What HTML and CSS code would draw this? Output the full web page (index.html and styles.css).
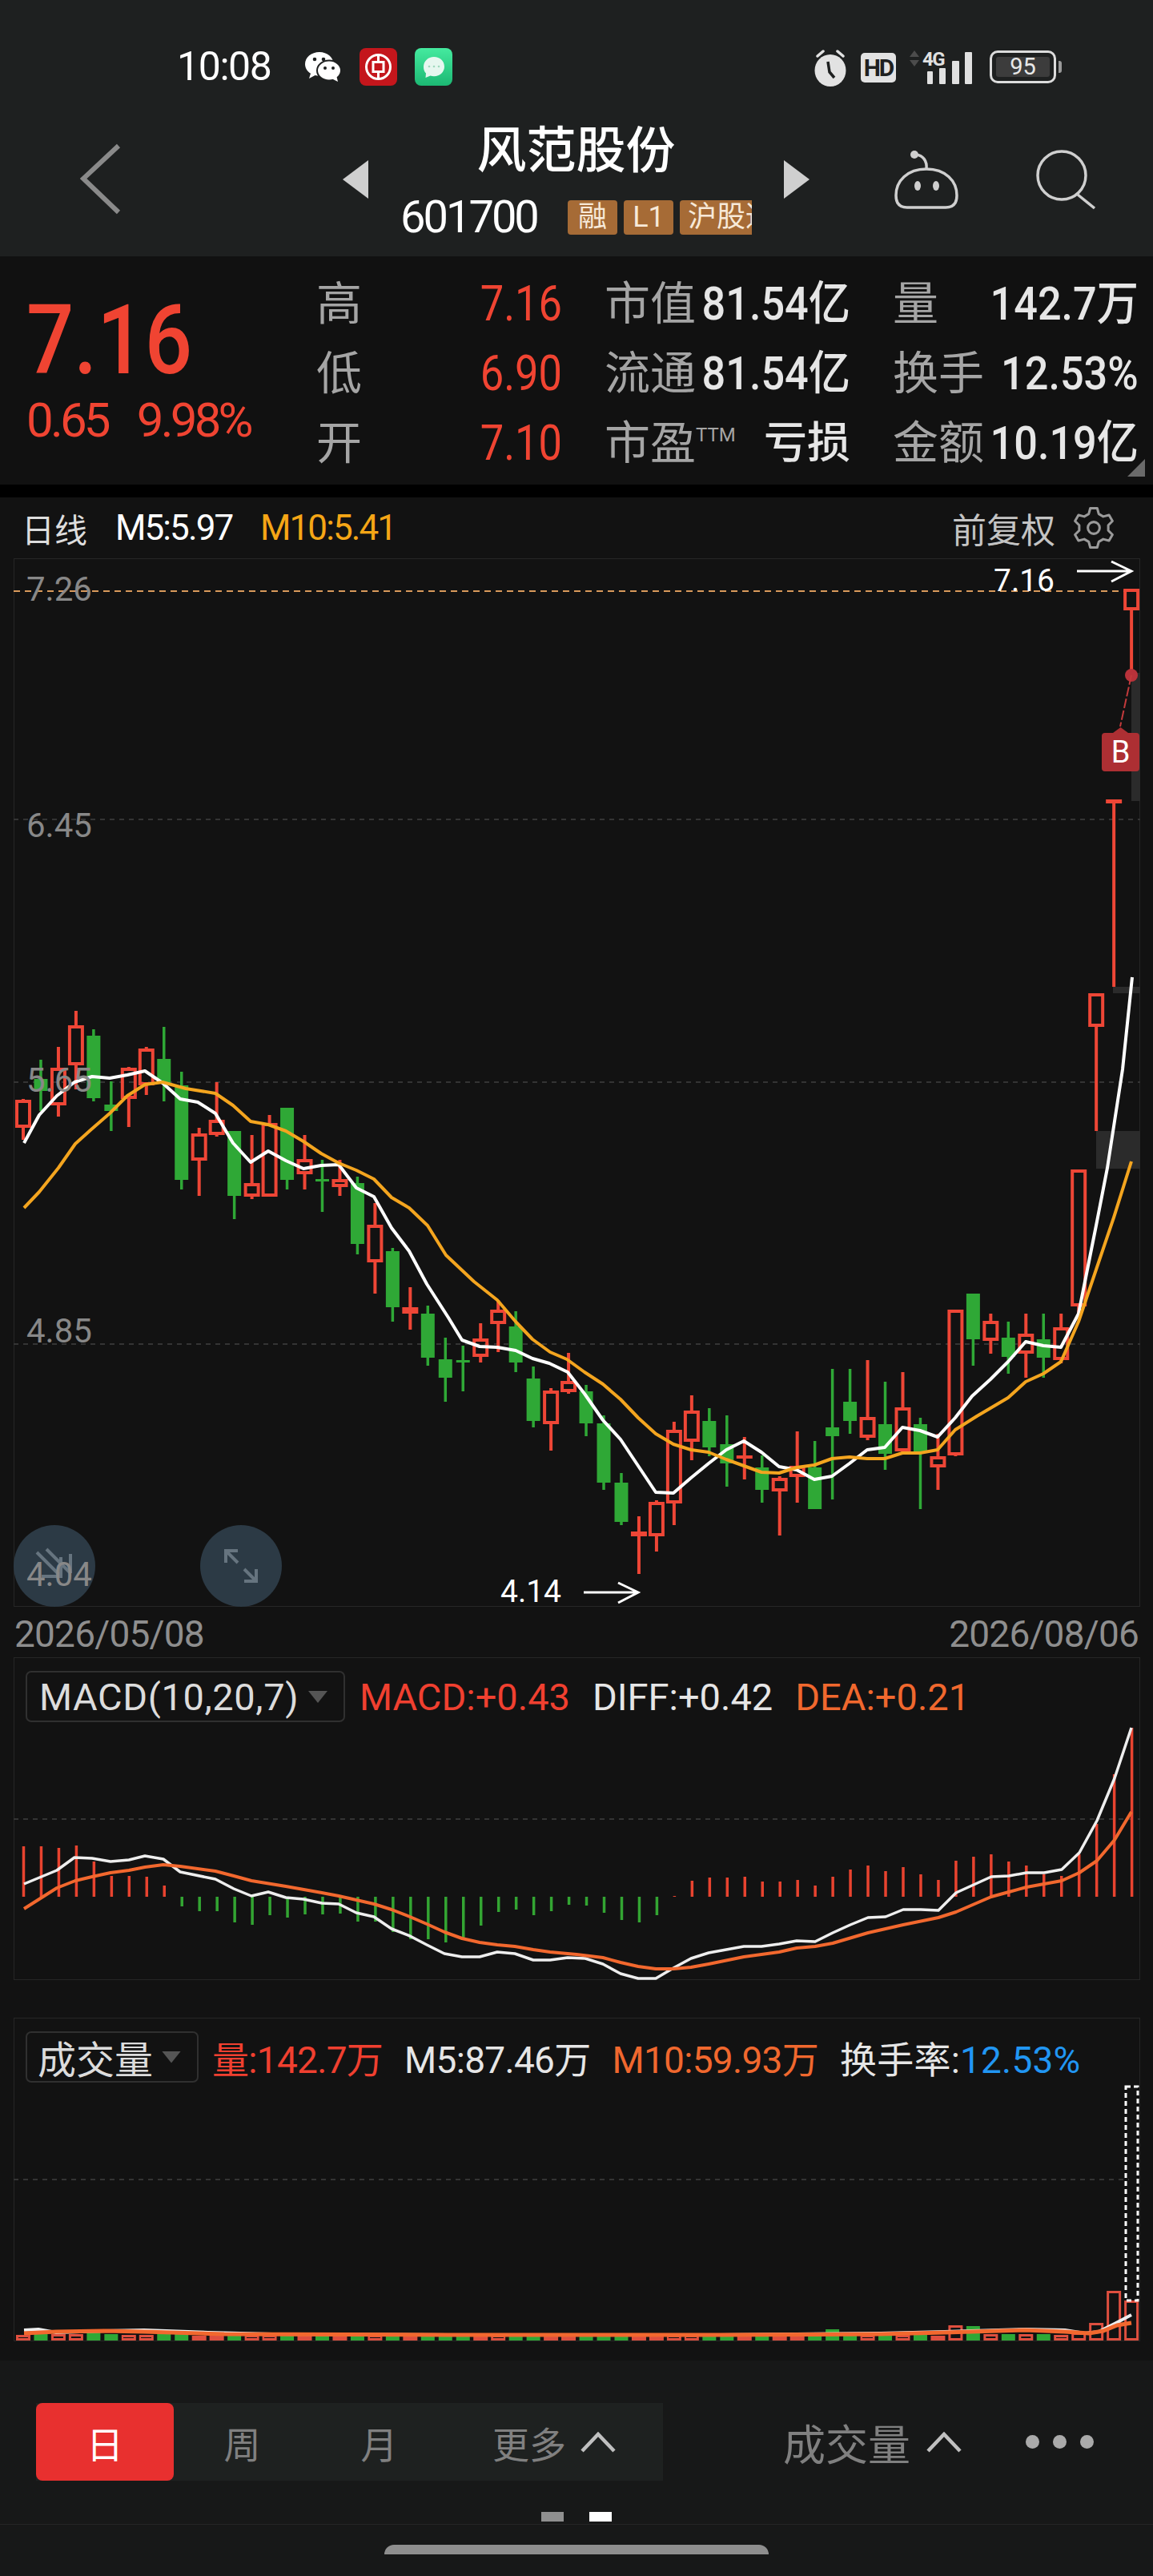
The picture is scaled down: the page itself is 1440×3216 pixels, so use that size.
FILE: index.html
```html
<!DOCTYPE html>
<html lang="zh-CN">
<head>
  <meta charset="UTF-8">
  <meta name="viewport" content="width=device-width, initial-scale=1">
  <title>风范股份</title>
  <link rel="stylesheet" href="styles.css">
</head>
<body>

  <div class="top">
    <!-- status bar -->
    <div class="status">
      <span class="clock">10:08</span>
      <svg class="ic-wechat" viewBox="381 65 46 38">
        <path fill="#fff" d="M399 65c-10 0-18 6.500-18 15 0 5 2.800 9 7 11.700l-2 6.300 7.500-4 6 1c8-1 17-6 17-15 0-8.500-8-15-17.500-15z"/>
        <circle cx="393" cy="74" r="2.300" fill="#1e2020"/>
        <circle cx="404" cy="74" r="2.300" fill="#1e2020"/>
        <ellipse cx="411" cy="88" rx="15" ry="12.500" fill="#fff" stroke="#1e2020" stroke-width="2"/>
        <path fill="#fff" d="M414 98l8 4-2-8z"/>
        <circle cx="406" cy="85" r="2" fill="#1e2020"/>
        <circle cx="416" cy="85" r="2" fill="#1e2020"/>
      </svg>
      <svg class="ic-app ic-bank" viewBox="0 0 47 47">
        <rect width="47" height="47" rx="8" fill="#c4161c"/>
        <circle cx="23.500" cy="23.500" r="15" fill="none" stroke="#fff" stroke-width="3"/>
        <rect x="17" y="17.500" width="13" height="12" fill="none" stroke="#fff" stroke-width="3"/>
        <path d="M23.500 8v9M23.500 30v9" stroke="#fff" stroke-width="3"/>
      </svg>
      <svg class="ic-app ic-msg" viewBox="0 0 47 47">
        <defs>
          <linearGradient id="msgbg" x1="0" y1="0" x2="0" y2="1">
            <stop offset="0" stop-color="#45ea9f"/>
            <stop offset="1" stop-color="#1cb873"/>
          </linearGradient>
        </defs>
        <rect width="47" height="47" rx="8" fill="url(#msgbg)"/>
        <path fill="#e6f7ef" d="M24 11c-7.500 0-13 5.500-13 12.500 0 3.500 1 6 3 8l-.5 5.500 6-2.500c1.500.5 3 .7 4.500.7 7.500 0 13-5.500 13-12 0-7-5.500-12.200-13-12.200z"/>
        <g fill="#9fd9bd"><circle cx="18" cy="23" r="1.300"/><circle cx="24" cy="23" r="1.300"/><circle cx="30" cy="23" r="1.300"/></g>
      </svg>
      <span class="status-gap"></span>
      <svg class="ic-alarm" viewBox="0 0 44 46">
        <g stroke="#e2e2e2" stroke-width="3.500" stroke-linecap="round">
          <path d="M6 8l7-6M38 8l-7-6"/>
        </g>
        <ellipse cx="22" cy="26" rx="19.500" ry="20" fill="#e2e2e2"/>
        <path d="M19 15l2 13 6 7" fill="none" stroke="#1e2020" stroke-width="3.500"/>
      </svg>
      <span class="hd">HD</span>
      <svg class="ic-signal" viewBox="1140 60 82 44">
        <path d="M1147 61l-6 8h12zM1147 81l-6-8h12z" fill="#4c4c4c"/>
        <text class="net" x="1157" y="80">4G</text>
        <g fill="#e0e0e0">
          <rect x="1163" y="87" width="7" height="16" rx="1"/>
          <rect x="1178" y="83" width="8" height="20" rx="1"/>
          <rect x="1194" y="74" width="9" height="29" rx="1"/>
          <rect x="1210" y="63" width="9" height="40" rx="1"/>
        </g>
      </svg>
      <span class="battery"><span class="battery-in">95</span></span>
      <span class="battery-nub"></span>
    </div>

    <!-- title row -->
    <div class="header">
      <div class="back-cell">
        <svg class="ic-back" viewBox="100 180 52 90"><path d="M148 183l-44 41 44 42" fill="none" stroke="#8a8a8a" stroke-width="6"/></svg>
      </div>
      <span class="tri tri-left"></span>
      <div class="name-box">
        <div class="name">风范股份</div>
        <div class="code-row">
          <span class="code">601700</span>
          <span class="tag">融</span>
          <span class="tag">L1</span>
          <span class="tag tag-cut">沪股通</span>
        </div>
      </div>
      <span class="tri tri-right"></span>
      <div class="head-tools">
        <svg class="ic-robot" viewBox="1115 188 84 75">
          <g fill="none" stroke="#cfcfcf" stroke-width="3.500">
            <path d="M1157 212c-24 0-38 15-38 33 0 10 5 15 14 15h48c9 0 14-5 14-15 0-18-14-33-38-33z"/>
            <path d="M1157 212c1-10-4-17-13-18"/>
          </g>
          <circle cx="1142" cy="194" r="5" fill="#cfcfcf"/>
          <ellipse cx="1146" cy="233" rx="4" ry="6" fill="#cfcfcf"/>
          <ellipse cx="1169" cy="233" rx="4" ry="6" fill="#cfcfcf"/>
        </svg>
        <svg class="ic-search" viewBox="1290 184 76 76">
          <ellipse cx="1323" cy="217" rx="30" ry="30" fill="none" stroke="#cfcfcf" stroke-width="3.500"/>
          <path d="M1343 241l21 17" fill="none" stroke="#cfcfcf" stroke-width="3.500"/>
        </svg>
      </div>
    </div>
  </div>

  <!-- quote block -->
  <div class="quote">
    <div class="price-box">
      <div class="price">7.16</div>
      <div class="change"><span>0.65</span><span>9.98%</span></div>
    </div>
    <div class="stats">
      <div class="stat"><span class="lbl">高</span><span class="val up">7.16</span></div>
      <div class="stat"><span class="lbl">市值</span><span class="val">81.54亿</span></div>
      <div class="stat"><span class="lbl">量</span><span class="val">142.7万</span></div>
      <div class="stat"><span class="lbl">低</span><span class="val up">6.90</span></div>
      <div class="stat"><span class="lbl">流通</span><span class="val">81.54亿</span></div>
      <div class="stat"><span class="lbl">换手</span><span class="val">12.53%</span></div>
      <div class="stat"><span class="lbl">开</span><span class="val up">7.10</span></div>
      <div class="stat"><span class="lbl">市盈<sup class="ttm">TTM</sup></span><span class="val val-cn">亏损</span></div>
      <div class="stat"><span class="lbl">金额</span><span class="val">10.19亿</span></div>
    </div>
    <span class="corner"></span>
  </div>
  <div class="band"></div>

  <!-- k line -->
  <div class="kline-head">
    <span class="period">日线</span>
    <span class="ma5">M5:5.97</span>
    <span class="ma10">M10:5.41</span>
    <span class="fq">前复权</span>
    <svg class="ic-gear" viewBox="0 0 24 24">
      <path fill="none" stroke="#9a9a9a" stroke-width="1.400" stroke-linejoin="round" d="M10 .7h4l.9 3.300 2.560 1.490 3.340-.89 2 3.470-2.430 2.450v2.960l2.430 2.450-2 3.470-3.340-.89-2.560 1.490-.9 3.300h-4l-.9-3.300-2.560-1.490-3.340.89-2-3.470 2.430-2.450v-2.960l-2.430-2.450 2-3.470 3.340.89 2.560-1.490z"/>
      <circle cx="12" cy="12" r="3.400" fill="none" stroke="#9a9a9a" stroke-width="1.400"/>
    </svg>
  </div>
  <div class="panel kline">
    <svg class="chart" width="1407" height="1309" viewBox="17 697 1407 1309">
      <g class="grid-lines">
        <path d="M17 1023H1424M17 1351H1424M17 1678H1424"/>
      </g>
      <path class="hi-line" d="M17 738H1405"/>
      <g fill="#2b2b2b">
        <rect x="1413" y="840" width="11" height="160"/>
        <rect x="1390" y="1232" width="34" height="8"/>
        <rect x="1369" y="1412" width="55" height="47"/>
      </g>
      <g id="candles"></g>
      <polyline id="ma5" class="ma-white" points=""/>
      <polyline id="ma10" class="ma-orange" points=""/>

      <text class="axis" x="33" y="750">7.26</text>
      <text class="axis" x="33" y="1045">6.45</text>
      <text class="axis" x="33" y="1363">5.65</text>
      <text class="axis" x="33" y="1676">4.85</text>

      <text class="mark" x="1241" y="738">7.16</text>
      <path class="arrow" d="M1345 713H1412M1388 701l25 12-25 13"/>
      <text class="mark" x="625" y="2000">4.14</text>
      <path class="arrow" d="M729 1988H796M772 1976l25 12-25 13"/>

      <circle cx="1413" cy="843" r="8" fill="#b8323a"/>
      <path d="M1413 843L1399 907" stroke="#c23a3c" stroke-width="2" stroke-dasharray="12 3"/>
      <path d="M1380 915h10l9.500-7 9.500 7h10q4 0 4 4v40q0 4-4 4h-39q-4 0-4-4v-40q0-4 4-4z" fill="#ad2f33"/>
      <text class="buy" x="1399.500" y="952">B</text>

      <circle class="float-btn" cx="68" cy="1955" r="51"/>
      <circle class="float-btn" cx="301" cy="1955" r="51"/>
      <path class="float-ic" d="M46 1938l30 30M76 1944v24H52M58 1934l30 30M88 1940v24"/>
      <path class="float-ic" d="M282 1936l15 15M282 1951v-15h15M320 1974l-15-15M320 1959v15h-15"/>
      <text class="axis" x="33" y="1980">4.04</text>
    </svg>
  </div>
  <div class="dates">
    <span>2026/05/08</span>
    <span>2026/08/06</span>
  </div>

  <!-- macd -->
  <div class="panel macd">
    <div class="legend legend-macd">
      <span class="select select-macd">MACD(10,20,7)<i class="caret"></i></span>
      <span class="c-red">MACD:+0.43</span>
      <span class="c-white">DIFF:+0.42</span>
      <span class="c-orange">DEA:+0.21</span>
    </div>
    <svg class="chart" width="1407" height="322" viewBox="17 2150 1407 322">
      <g class="grid-lines"><path d="M17 2271H1424"/></g>
      <g id="macd-bars"></g>
      <polyline id="diff" class="diff-line" points=""/>
      <polyline id="dea" class="dea-line" points=""/>
    </svg>
  </div>

  <!-- volume -->
  <div class="panel vol">
    <div class="legend legend-vol">
      <span class="select select-vol">成交量<i class="caret"></i></span>
      <span class="c-red">量:142.7万</span>
      <span class="c-white">M5:87.46万</span>
      <span class="c-orange">M10:59.93万</span>
      <span class="c-white rate">换手率:<b class="c-blue">12.53%</b></span>
    </div>
    <svg class="chart" width="1407" height="323" viewBox="17 2600 1407 323">
      <g class="grid-lines"><path d="M17 2721H1410"/></g>
      <g id="vol-bars"></g>
      <rect class="vol-dash" x="1406" y="2605" width="15" height="267"/>
      <polyline id="vol-ma5" class="vol-white" points=""/>
      <polyline id="vol-ma10" class="vol-orange" points=""/>
    </svg>
  </div>

  <!-- bottom tabs -->
  <div class="footer">
    <div class="tab-row">
      <div class="tabs">
        <span class="tab tab-on">日</span>
        <span class="tab">周</span>
        <span class="tab">月</span>
        <span class="tab tab-more">更多
          <svg class="chev" viewBox="0 0 44 26"><path d="M2 24L22 3l20 21"/></svg>
        </span>
      </div>
      <span class="vol-pick">成交量
        <svg class="chev" viewBox="0 0 44 26"><path d="M2 24L22 3l20 21"/></svg>
      </span>
      <span class="more-dots"><i></i><i></i><i></i></span>
    </div>
    <div class="pager"><i></i><i class="pager-on"></i></div>
    <div class="home-line"><span class="home-bar"></span></div>
  </div>

  <script src="chart.js"></script>
</body>
</html>
```
FILE: styles.css
```css
* {
  box-sizing: border-box;
}

body {
  margin: 0;
  width: 1440px;
  height: 3216px;
  overflow: hidden;
  background: #121212;
  color: #e0e0e0;
  font-family: Roboto, "Noto Sans CJK SC", sans-serif;
}

svg {
  display: block;
}

/* Top */
.top {
  height: 320px;
  background: #1e2020;
}

.status {
  display: flex;
  align-items: center;
  height: 107px;
  padding: 60px 0 0 221px;
}

.clock {
  width: 118px;
  font-size: 50px;
  line-height: 47px;
  letter-spacing: -1.400px;
  color: #fff;
  white-space: nowrap;
}

.ic-wechat {
  width: 46px;
  height: 38px;
  margin-left: 42px;
}

.ic-app {
  width: 47px;
  height: 47px;
}

.ic-bank {
  margin-left: 22px;
}

.ic-msg {
  margin-left: 22px;
}

.status-gap {
  width: 450px;
}

.ic-alarm {
  width: 44px;
  height: 46px;
  margin-top: 2px;
}

.hd {
  width: 44px;
  height: 37px;
  margin: 2px 0 0 16px;
  border-radius: 5px;
  background: #e2e2e2;
  color: #1e2020;
  font-size: 30px;
  font-weight: 700;
  line-height: 37px;
  letter-spacing: -2px;
  text-align: center;
}

.ic-signal {
  width: 82px;
  height: 44px;
  margin-left: 16px;
  overflow: visible;
}

.net {
  font-size: 24px;
  font-weight: 700;
  fill: #e0e0e0;
  letter-spacing: -1.500px;
}

.battery {
  width: 83px;
  height: 41px;
  margin-left: 19px;
  padding: 5px;
  border: 3px solid #dcdcdc;
  border-radius: 10px;
}

.battery-in {
  display: block;
  height: 25px;
  border-radius: 3px;
  background: #3c3c3c;
  color: #e8e8e8;
  font-size: 29px;
  line-height: 25px;
  text-align: center;
}

.battery-nub {
  width: 4px;
  height: 15px;
  margin-left: 3px;
  border-radius: 0 3px 3px 0;
  background: #9a9a9a;
}

.header {
  display: grid;
  grid-template-columns: 428px 32px 519px 32px 1fr;
  align-items: center;
  height: 213px;
}

.back-cell {
  padding-left: 100px;
  margin-top: 21px;
}

.ic-back {
  width: 52px;
  height: 90px;
}

.tri {
  height: 48px;
  margin-top: 21px;
  background: #cfcfcf;
}

.tri-left {
  clip-path: polygon(100% 0, 0 50%, 100% 100%);
}

.tri-right {
  clip-path: polygon(0 0, 100% 50%, 0 100%);
}

.name-box {
  display: flex;
  flex-direction: column;
  align-items: center;
  height: 213px;
  padding-top: 41px;
}

.name {
  height: 82px;
  color: #fff;
  font-size: 62px;
  font-weight: 500;
  line-height: 82px;
}

.code-row {
  display: flex;
  align-items: center;
  height: 43px;
  margin-top: 20px;
}

.code {
  width: 170px;
  margin-right: 39px;
  color: #fff;
  font-size: 56px;
  line-height: 43px;
  letter-spacing: -3px;
}

.tag {
  width: 62px;
  height: 43px;
  margin-right: 8px;
  border-radius: 4px;
  background: #a66b36;
  color: #f7e9d8;
  font-size: 36px;
  line-height: 43px;
  text-align: center;
}

.tag-cut {
  width: 90px;
  margin-right: 0;
  padding-left: 10px;
  border-radius: 4px 0 0 4px;
  overflow: hidden;
  white-space: nowrap;
  text-align: left;
}

.head-tools {
  display: flex;
  align-items: center;
  gap: 94px;
  margin-top: 21px;
  padding-left: 104px;
}

.ic-robot {
  width: 84px;
  height: 75px;
}

.ic-search {
  width: 76px;
  height: 76px;
}

/* Quote */
.quote {
  position: relative;
  display: flex;
  height: 285px;
  background: #111;
}

.price-box {
  width: 395px;
  padding: 45px 0 0 33px;
  color: #f04432;
}

.price {
  font-size: 120px;
  font-weight: 500;
  line-height: 120px;
  transform: scaleX(.87);
  transform-origin: left;
}

.change {
  display: flex;
  gap: 36px;
  font-size: 60px;
  line-height: 80px;
  letter-spacing: -3.800px;
}

.stats {
  display: grid;
  grid-template-columns: repeat(3, 307px);
  grid-auto-rows: 87px;
  column-gap: 53px;
  padding-top: 16px;
}

.stat {
  display: flex;
  align-items: center;
  justify-content: space-between;
  height: 87px;
  white-space: nowrap;
}

.lbl {
  flex: none;
  color: #a5a5a5;
  font-size: 57px;
  line-height: 87px;
}

.ttm {
  font-size: 24px;
  line-height: 0;
  vertical-align: 22px;
}

.val {
  flex: none;
  margin-left: -40px;
  color: #e6e6e6;
  font-size: 58px;
  font-weight: 500;
  line-height: 87px;
  transform: scaleX(.9);
  transform-origin: right;
}

.val.up {
  color: #f04432;
  font-size: 61px;
  font-weight: 400;
  transform: scaleX(.86);
}

.val-cn {
  font-size: 54px;
  transform: none;
}

.corner {
  position: absolute;
  right: 10px;
  bottom: 10px;
  width: 22px;
  height: 22px;
  background: #6a6a6a;
  clip-path: polygon(100% 0, 100% 100%, 0 100%);
}

.band {
  height: 16px;
  background: #000;
}

/* K line head */
.kline-head {
  display: flex;
  align-items: center;
  height: 76px;
  padding: 0 48px 0 27px;
}

.period {
  width: 117px;
  color: #ddd;
  font-size: 41px;
}

.ma5,
.ma10 {
  font-size: 44px;
  letter-spacing: -1.900px;
}

.ma5 {
  width: 181px;
  color: #fff;
}

.ma10 {
  color: #f5a616;
}

.fq {
  margin-left: auto;
  color: #c4c4c4;
  font-size: 43px;
}

.ic-gear {
  width: 52px;
  height: 52px;
  margin-left: 22px;
}

/* Panels */
.panel {
  margin: 0 16px 0 17px;
  box-shadow: inset 0 0 0 1px #262626;
}

.kline {
  height: 1309px;
}

.chart {
  overflow: visible;
}

.grid-lines path {
  fill: none;
  stroke: #343434;
  stroke-width: 2;
  stroke-dasharray: 6 6;
}

.hi-line {
  fill: none;
  stroke: #d99a5b;
  stroke-width: 2;
  stroke-dasharray: 8 6;
}

.ma-white,
.ma-orange {
  fill: none;
  stroke-width: 4;
  stroke-linejoin: round;
}

.ma-white {
  stroke: #fff;
}

.ma-orange {
  stroke: #f4a51f;
}

.axis {
  fill: #888;
  font-size: 42px;
}

.mark {
  fill: #fff;
  font-size: 39px;
}

.arrow {
  fill: none;
  stroke: #fff;
  stroke-width: 3;
}

.buy {
  fill: #fff;
  font-size: 38px;
  text-anchor: middle;
}

.float-btn {
  fill: #2c3a45;
}

.float-ic {
  fill: none;
  stroke: #66747f;
  stroke-width: 4;
}

.dates {
  display: flex;
  align-items: center;
  justify-content: space-between;
  height: 63px;
  padding: 4px 18px 0;
  color: #8e8e8e;
  font-size: 46px;
  letter-spacing: -.8px;
}

/* Legends */
.legend {
  display: flex;
  align-items: center;
  font-size: 47px;
  white-space: nowrap;
}

.legend-macd {
  gap: 28px;
  height: 81px;
  padding: 17px 0 0 15px;
}

.legend-vol {
  gap: 27px;
  height: 81px;
  padding: 16px 0 0 15px;
  font-size: 46px;
  letter-spacing: -.7px;
}

.rate {
  letter-spacing: .2px;
}

.select {
  position: relative;
  display: flex;
  align-items: center;
  height: 64px;
  border: 2px solid #303030;
  border-radius: 7px;
  color: #dcdcdc;
}

.select-macd {
  width: 399px;
  margin-right: -10px;
  padding-left: 15px;
  letter-spacing: .6px;
}

.select-vol {
  width: 216px;
  margin-right: -10px;
  padding-left: 13px;
  font-size: 48px;
  letter-spacing: 0;
}

.caret {
  position: absolute;
  right: 20px;
  top: 23px;
  width: 24px;
  height: 15px;
  background: #555;
  clip-path: polygon(0 0, 100% 0, 50% 100%);
}

.c-red {
  color: #f04030;
}

.c-white {
  color: #e6e6e6;
}

.c-orange {
  color: #f0682e;
}

.c-blue {
  color: #2196f3;
  font-weight: 400;
}

.macd {
  height: 403px;
}

.vol {
  height: 404px;
  margin-top: 47px;
}

.diff-line,
.dea-line,
.vol-white,
.vol-orange {
  fill: none;
  stroke-linejoin: round;
}

.diff-line {
  stroke: #eee;
  stroke-width: 3.500;
}

.dea-line {
  stroke: #f2682e;
  stroke-width: 4;
}

.vol-white {
  stroke: #eee;
  stroke-width: 4;
}

.vol-orange {
  stroke: #f2682e;
  stroke-width: 5;
}

.vol-dash {
  fill: none;
  stroke: #fff;
  stroke-width: 3;
  stroke-dasharray: 6 4;
}

/* Footer */
.footer {
  height: 269px;
  margin-top: 24px;
  padding-top: 53px;
  background: #171818;
}

.tab-row {
  display: flex;
  align-items: center;
  height: 97px;
  padding-left: 45px;
}

.tabs {
  display: grid;
  grid-template-columns: 172px 171px 171px 269px;
  width: 783px;
  height: 97px;
  background: #1e2120;
}

.tab {
  display: flex;
  align-items: center;
  justify-content: center;
  color: #808080;
  font-size: 46px;
}

.tab-on {
  border-radius: 8px;
  background: #e8302f;
  color: #fff;
}

.tab-more {
  gap: 18px;
  justify-content: flex-start;
  padding-left: 56px;
}

.chev {
  width: 44px;
  height: 26px;
  fill: none;
  stroke: #c0c0c0;
  stroke-width: 4.500;
}

.vol-pick {
  display: flex;
  align-items: center;
  gap: 20px;
  margin-left: 150px;
  color: #808080;
  font-size: 53px;
}

.more-dots {
  display: flex;
  gap: 17px;
  margin-left: 80px;
}

.more-dots i {
  width: 17px;
  height: 17px;
  border-radius: 50%;
  background: #aaa;
}

.pager {
  display: flex;
  justify-content: center;
  gap: 32px;
  height: 12px;
  margin-top: 39px;
}

.pager i {
  width: 28px;
  height: 12px;
  background: #8f8f8f;
}

.pager .pager-on {
  background: #fff;
}

.home-line {
  display: flex;
  justify-content: center;
  height: 68px;
  margin-top: 3px;
  padding-top: 25px;
  border-top: 1px solid #252525;
}

.home-bar {
  width: 480px;
  height: 12px;
  border-radius: 12px 12px 0 0;
  background: #8e8e8e;
}
```
FILE: chart.js
```js
// day candles: high, body top, body bottom, low (screen y), up or down
const candles = [
  [1372,1373,1408,1423,1],[1323,1347,1362,1387,0],[1307,1333,1380,1394,1],[1262,1280,1330,1360,1],
  [1285,1293,1371,1375,0],[1350,1379,1387,1412,0],[1332,1333,1372,1407,1],[1307,1309,1355,1367,1],
  [1282,1322,1352,1375,0],[1338,1355,1473,1485,0],[1408,1415,1449,1493,1],[1351,1398,1417,1419,1],
  [1412,1412,1493,1522,0],[1417,1477,1494,1497,1],[1392,1402,1494,1494,1],[1383,1383,1473,1485,0],
  [1417,1447,1466,1485,1],[1448,1472,1475,1513,0],[1448,1472,1482,1493,1],[1469,1477,1553,1566,0],
  [1502,1529,1576,1615,1],[1558,1562,1632,1650,0],[1607,1632,1640,1660,1],[1630,1640,1695,1705,0],
  [1670,1697,1720,1750,0],[1680,1698,1700,1737,0],[1652,1671,1694,1701,1],[1623,1635,1653,1688,1],
  [1637,1656,1701,1713,0],[1706,1721,1774,1782,0],[1733,1736,1778,1811,1],[1689,1724,1738,1740,1],
  [1729,1737,1777,1793,0],[1767,1777,1851,1860,0],[1839,1851,1900,1904,0],[1893,1912,1918,1965,1],
  [1873,1875,1918,1937,1],[1775,1785,1877,1904,1],[1742,1761,1800,1823,1],[1758,1774,1807,1818,0],
  [1767,1803,1827,1856,0],[1794,1817,1821,1847,1],[1817,1832,1860,1876,0],[1843,1845,1862,1917,1],
  [1787,1830,1844,1876,1],[1799,1832,1884,1884,0],[1709,1782,1793,1872,0],[1709,1750,1774,1790,0],
  [1698,1769,1795,1798,1],[1725,1778,1815,1835,0],[1713,1757,1812,1813,1],[1770,1778,1812,1884,0],
  [1790,1818,1832,1860,1],[1635,1635,1817,1818,1],[1615,1615,1672,1705,0],[1640,1649,1674,1690,1],
  [1650,1670,1694,1715,0],[1640,1665,1690,1720,1],[1640,1672,1695,1720,0],[1640,1657,1698,1702,1],
  [1460,1460,1631,1640,1],[1240,1240,1282,1412,1],[998,998,1003,1232,1],[735,735,762,840,1]
];

const ma5 = [
  30,1427, 49,1392, 71,1368, 93,1351, 115,1344, 137,1346, 159,1342, 181,1337, 203,1352, 225,1372,
  247,1376, 269,1390, 291,1427, 313,1451, 335,1437, 357,1449, 379,1459, 401,1455, 423,1454, 445,1483,
  467,1494, 489,1533, 511,1562, 533,1603, 560,1645, 577,1673, 599,1681, 621,1682, 644,1686, 665,1696,
  686,1702, 709,1713, 730,1740, 753,1773, 775,1797, 797,1830, 819,1863, 841,1864, 863,1845, 885,1827,
  907,1810, 929,1799, 951,1813, 973,1831, 995,1835, 1017,1847, 1039,1843, 1061,1827, 1083,1810, 1105,1807,
  1127,1782, 1149,1786, 1171,1794, 1193,1770, 1214,1743, 1237,1722, 1259,1700, 1281,1675, 1303,1680,
  1325,1682, 1347,1640, 1369,1530, 1383,1458, 1402,1335, 1414,1220
];

const ma10 = [
  30,1508, 49,1488, 73,1458, 94,1428, 114,1410, 137,1390, 159,1368, 181,1354, 203,1351, 232,1359,
  269,1365, 291,1380, 313,1400, 335,1404, 357,1412, 379,1425, 401,1440, 423,1452, 445,1461, 467,1472,
  489,1495, 511,1508, 534,1530, 557,1567, 592,1600, 621,1623, 644,1650, 665,1672, 687,1688, 708,1697,
  730,1713, 753,1728, 775,1747, 797,1770, 819,1790, 841,1803, 863,1810, 885,1813, 907,1822, 929,1830,
  951,1838, 973,1839, 995,1832, 1017,1829, 1039,1821, 1061,1819, 1083,1821, 1105,1821, 1127,1814, 1149,1814,
  1171,1810, 1193,1785, 1220,1768, 1237,1758, 1259,1745, 1281,1725, 1303,1715, 1325,1700, 1347,1650,
  1369,1585, 1391,1520, 1413,1450
];

// macd bar length from the zero line, plus is up
const macdBars = [
  63,63,61,64,44,26,26,25,14,-12,-18,-18,-32,-35,-23,-26,-22,-22,-21,-31,-31,-44,-53,-53,-57,-51,-36,-19,-16,-23,-18,-10,
  -11,-20,-29,-32,-23,1,20,24,24,25,19,19,21,14,25,34,39,32,37,28,21,45,50,53,44,39,28,26,53,91,153,211
];

const diff = [
  30,2352, 71,2335, 93,2319, 115,2320, 138,2324, 161,2322, 181,2317, 204,2321, 225,2337, 269,2346,
  292,2358, 314,2367, 335,2362, 357,2369, 379,2371, 402,2376, 423,2377, 445,2388, 467,2393, 489,2408,
  512,2417, 533,2428, 555,2439, 577,2443, 599,2443, 621,2437, 643,2439, 666,2447, 687,2447, 709,2444,
  731,2445, 753,2452, 775,2464, 797,2470, 819,2470, 841,2457, 863,2445, 885,2438, 907,2434, 929,2430,
  951,2430, 973,2427, 995,2423, 1018,2424, 1040,2413, 1062,2403, 1084,2394, 1106,2393, 1128,2384, 1150,2384,
  1172,2385, 1194,2363, 1216,2353, 1238,2343, 1260,2342, 1282,2338, 1304,2338, 1326,2334, 1348,2313,
  1370,2273, 1392,2220, 1413,2157
];

const dea = [
  30,2383, 71,2357, 94,2348, 115,2343, 138,2338, 161,2335, 181,2331, 204,2328, 225,2330, 269,2336,
  292,2342, 314,2348, 357,2355, 402,2363, 423,2367, 445,2372, 467,2377, 489,2384, 512,2393, 533,2402,
  555,2412, 577,2420, 599,2425, 621,2428, 643,2430, 666,2434, 687,2437, 720,2440, 753,2444, 775,2450,
  797,2455, 819,2458, 841,2458, 863,2456, 885,2452, 929,2443, 973,2437, 995,2432, 1018,2430, 1040,2426,
  1084,2413, 1128,2403, 1172,2394, 1194,2387, 1238,2368, 1260,2362, 1282,2356, 1304,2352, 1326,2348,
  1348,2338, 1370,2323, 1392,2297, 1413,2262
];

const volHeights = [
  7,8,8,8,10,8,7,7,8,8,6,6,8,7,7,8,6,8,6,8,7,7,5,8,8,5,6,7,8,8,6,6,
  8,8,8,6,6,7,7,8,8,6,8,6,6,8,14,8,7,8,7,8,6,19,18,8,8,8,8,7,10,22,62,50
];

const volMa5 = [
  30,2909, 48,2908, 70,2912, 130,2910, 180,2909, 260,2912, 340,2914, 560,2915, 900,2915,
  1100,2913, 1180,2911, 1280,2908, 1330,2909, 1355,2913, 1372,2911, 1392,2901, 1413,2890
];
const volMa10 = [
  30,2913, 70,2911, 130,2910, 180,2911, 280,2914, 560,2915, 900,2915, 1100,2914,
  1180,2912, 1280,2909, 1330,2911, 1360,2913, 1378,2910, 1395,2903, 1413,2900
];

const RED = "#ee4636";
const GREEN = "#2fa836";
const VOL_RED = "#df4f3f";
const svgNS = "http://www.w3.org/2000/svg";

const xAt = i => 29 + 21.97 * i;

function addRect(parent, x, y, w, h, fill, stroke, strokeW) {
  const r = document.createElementNS(svgNS, "rect");
  r.setAttribute("x", x);
  r.setAttribute("y", y);
  r.setAttribute("width", w);
  r.setAttribute("height", Math.max(h, 0));
  r.setAttribute("fill", fill);
  if (stroke) {
    r.setAttribute("stroke", stroke);
    r.setAttribute("stroke-width", strokeW);
  }
  parent.appendChild(r);
}

function setLine(id, pts) {
  let out = [];
  for (let i = 0; i < pts.length; i += 2) {
    out.push(pts[i] + "," + pts[i + 1]);
  }
  document.getElementById(id).setAttribute("points", out.join(" "));
}

const candleBox = document.getElementById("candles");
candles.forEach((c, i) => {
  const x = xAt(i);
  const [hi, top, bot, lo, up] = c;
  if (up) {
    addRect(candleBox, x - 2, hi, 4, top - hi, RED);
    addRect(candleBox, x - 2, bot, 4, lo - bot, RED);
    if (bot - top < 9) {
      addRect(candleBox, x - 10, top, 20, bot - top, RED);
    } else {
      addRect(candleBox, x - 8, top + 2, 16, bot - top - 4, "none", RED, 4);
    }
  } else {
    addRect(candleBox, x - 1.75, hi, 3.5, lo - hi, GREEN);
    addRect(candleBox, x - 8.5, top, 17, Math.max(bot - top, 3), GREEN);
  }
});

const macdBox = document.getElementById("macd-bars");
macdBars.forEach((v, i) => {
  const x = xAt(i) + 0.5;
  if (v > 0) {
    addRect(macdBox, x - 1.75, 2368 - v, 3.5, v, "#e8432f");
  } else {
    addRect(macdBox, x - 1.75, 2368, 3.5, -v, "#33a532");
  }
});

const volBox = document.getElementById("vol-bars");
volHeights.forEach((h, i) => {
  const x = xAt(i);
  if (candles[i][4]) {
    addRect(volBox, x - 7.5, 2922 - h + 1.5, 15, h - 3, "none", VOL_RED, 3);
  } else {
    addRect(volBox, x - 8.5, 2922 - h, 17, h, GREEN);
  }
});

setLine("ma5", ma5);
setLine("ma10", ma10);
setLine("diff", diff);
setLine("dea", dea);
setLine("vol-ma5", volMa5);
setLine("vol-ma10", volMa10);
```
